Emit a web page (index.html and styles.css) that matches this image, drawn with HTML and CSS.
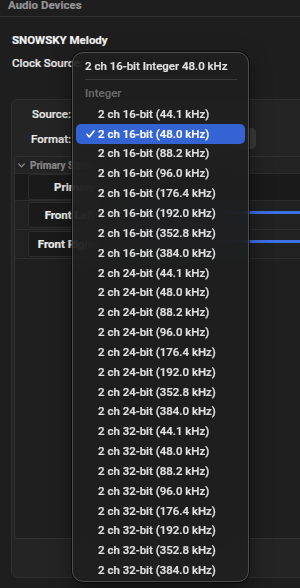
FILE: index.html
```html
<!DOCTYPE html>
<html>
<head>
<meta charset="utf-8">
<link rel="stylesheet" href="styles.css">
</head>
<body>
<div class="title"><span>Audio Devices</span></div>
<div class="device">
  <div class="name">SNOWSKY Melody</div>
  <div class="clock">Clock Source:</div>
</div>
<div class="panel">
  <div class="field"><span class="lbl">Source:</span><span class="val"></span></div>
  <div class="field"><span class="lbl">Format:</span><span class="popup"></span></div>
  <div class="outline">
    <div class="ohead">
      <svg class="chev" width="7" height="5" viewBox="0 0 7 5"><path d="M0.7 0.9 L3.5 3.9 L6.3 0.9" fill="none" stroke="#8a8a8a" stroke-width="1.3" stroke-linecap="round" stroke-linejoin="round"/></svg>
      <span>Primary Stream</span>
    </div>
    <div class="orow first"><div class="cell">Primary</div></div>
    <div class="orow"><div class="cell">Front Left</div><div class="slider"></div></div>
    <div class="orow last"><div class="cell">Front Right</div><div class="slider"></div></div>
  </div>
</div>

<div class="menu">
  <div class="mhead">2 ch 16-bit Integer 48.0 kHz</div>
  <div class="sep"></div>
  <div class="group">Integer</div>
  <div class="item"><span class="check"></span>2 ch 16-bit (44.1 kHz)</div>
  <div class="item sel"><span class="check"><svg width="9" height="8" viewBox="0 0 9 8"><path d="M1 4.3 L3.3 6.9 L8 1" fill="none" stroke="#fff" stroke-width="1.6" stroke-linecap="round" stroke-linejoin="round"/></svg></span>2 ch 16-bit (48.0 kHz)</div>
  <div class="item"><span class="check"></span>2 ch 16-bit (88.2 kHz)</div>
  <div class="item"><span class="check"></span>2 ch 16-bit (96.0 kHz)</div>
  <div class="item"><span class="check"></span>2 ch 16-bit (176.4 kHz)</div>
  <div class="item"><span class="check"></span>2 ch 16-bit (192.0 kHz)</div>
  <div class="item"><span class="check"></span>2 ch 16-bit (352.8 kHz)</div>
  <div class="item"><span class="check"></span>2 ch 16-bit (384.0 kHz)</div>
  <div class="item"><span class="check"></span>2 ch 24-bit (44.1 kHz)</div>
  <div class="item"><span class="check"></span>2 ch 24-bit (48.0 kHz)</div>
  <div class="item"><span class="check"></span>2 ch 24-bit (88.2 kHz)</div>
  <div class="item"><span class="check"></span>2 ch 24-bit (96.0 kHz)</div>
  <div class="item"><span class="check"></span>2 ch 24-bit (176.4 kHz)</div>
  <div class="item"><span class="check"></span>2 ch 24-bit (192.0 kHz)</div>
  <div class="item"><span class="check"></span>2 ch 24-bit (352.8 kHz)</div>
  <div class="item"><span class="check"></span>2 ch 24-bit (384.0 kHz)</div>
  <div class="item"><span class="check"></span>2 ch 32-bit (44.1 kHz)</div>
  <div class="item"><span class="check"></span>2 ch 32-bit (48.0 kHz)</div>
  <div class="item"><span class="check"></span>2 ch 32-bit (88.2 kHz)</div>
  <div class="item"><span class="check"></span>2 ch 32-bit (96.0 kHz)</div>
  <div class="item"><span class="check"></span>2 ch 32-bit (176.4 kHz)</div>
  <div class="item"><span class="check"></span>2 ch 32-bit (192.0 kHz)</div>
  <div class="item"><span class="check"></span>2 ch 32-bit (352.8 kHz)</div>
  <div class="item"><span class="check"></span>2 ch 32-bit (384.0 kHz)</div>
</div>
</body>
</html>
```
FILE: styles.css
```css
html, body {
  margin: 0;
  padding: 0;
}
body {
  width: 300px;
  height: 588px;
  overflow: hidden;
  position: relative;
  background: #1e1e1e;
  font-family: Roboto, "Liberation Sans", sans-serif;
  font-size: 11.5px;
  font-weight: 500;
  color: #e4e4e4;
  -webkit-text-stroke: 0.2px currentColor;
}

.title {
  height: 16px;
  border-bottom: 1px solid #323232;
  padding-left: 8px;
  overflow: hidden;
}
.title span {
  display: block;
  font-size: 11.5px;
  font-weight: 700;
  line-height: 14px;
  margin-top: -2px;
  color: #959595;
}

.device {
  padding: 15px 12px 0;
}
.name {
  font-weight: 700;
  line-height: 16px;
  color: #f2f2f2;
}
.clock {
  margin-top: 7px;
  line-height: 16px;
  color: #e6e6e6;
}

.panel {
  margin: 28px -30px 0 11px;
  border: 1px solid #2f2f2f;
  border-radius: 6px;
  background: #242424;
  padding: 6px 0 38px 0;
}
.field {
  display: grid;
  grid-template-columns: 59px 176px;
  column-gap: 9px;
  align-items: center;
  height: 16px;
}
.field + .field {
  margin-top: 6px;
  height: 21px;
}
.lbl {
  text-align: right;
  color: #ebebeb;
  line-height: 16px;
}
.popup {
  display: block;
  height: 21px;
  border-radius: 5px;
  background: #3c3c3c;
}

.outline {
  margin: 7px 0 0 2px;
  height: 383px;
  box-sizing: border-box;
  border: 1px solid #323232;
  border-radius: 3px;
  background: #1f1f1f;
}
.ohead {
  height: 16px;
  display: flex;
  align-items: center;
  padding-left: 3px;
  font-size: 10px;
  font-weight: 700;
  color: #8a8a8a;
  background: #232323;
}
.chev {
  margin-right: 5px;
}
.orow {
  display: flex;
  height: 28px;
  border-top: 1px solid #2c2c2c;
  background: #212121;
}
.orow.first {
  height: 26px;
  background: #1a1a1a;
}
.orow.last {
  border-bottom: 1px solid #2c2c2c;
}
.cell {
  box-sizing: border-box;
  width: 74px;
  height: 26px;
  margin: 1px 0 0 13px;
  border: 1px solid #2c2c2c;
  border-radius: 3px;
  background: #1a1a1a;
  padding-right: 6px;
  display: flex;
  align-items: center;
  justify-content: flex-end;
  font-weight: 700;
  color: #eeeeee;
  white-space: nowrap;
}
.orow.first .cell {
  margin-top: 0;
}
.slider {
  flex: 1;
  height: 3px;
  margin: 10px 0 0 12px;
  background: #3b6fe3;
}

.menu {
  position: absolute;
  left: 72px;
  top: 52px;
  width: 177px;
  box-sizing: border-box;
  border: 1px solid #4e4e4e;
  border-radius: 11px;
  background: rgba(30, 30, 30, 0.86);
  backdrop-filter: blur(16px);
  box-shadow: 0 0 0 1px rgba(0, 0, 0, 0.55), 0 8px 22px rgba(0, 0, 0, 0.45);
  padding: 3px 0 1px;
  color: #e2e2e2;
  white-space: nowrap;
}
.mhead {
  height: 20px;
  line-height: 20px;
  padding-left: 12px;
}
.sep {
  height: 1px;
  margin: 3px 11px 4px 12px;
  background: #3a3a3a;
}
.group {
  height: 19.85px;
  line-height: 19.85px;
  padding-left: 12px;
  color: #686868;
}
.item {
  height: 19.85px;
  display: flex;
  align-items: center;
  margin: 0 3px;
  padding-left: 10px;
  border-radius: 5px;
}
.item.sel {
  background: #3463d3;
  color: #ffffff;
}
.check {
  width: 12px;
  display: flex;
  align-items: center;
}
```
